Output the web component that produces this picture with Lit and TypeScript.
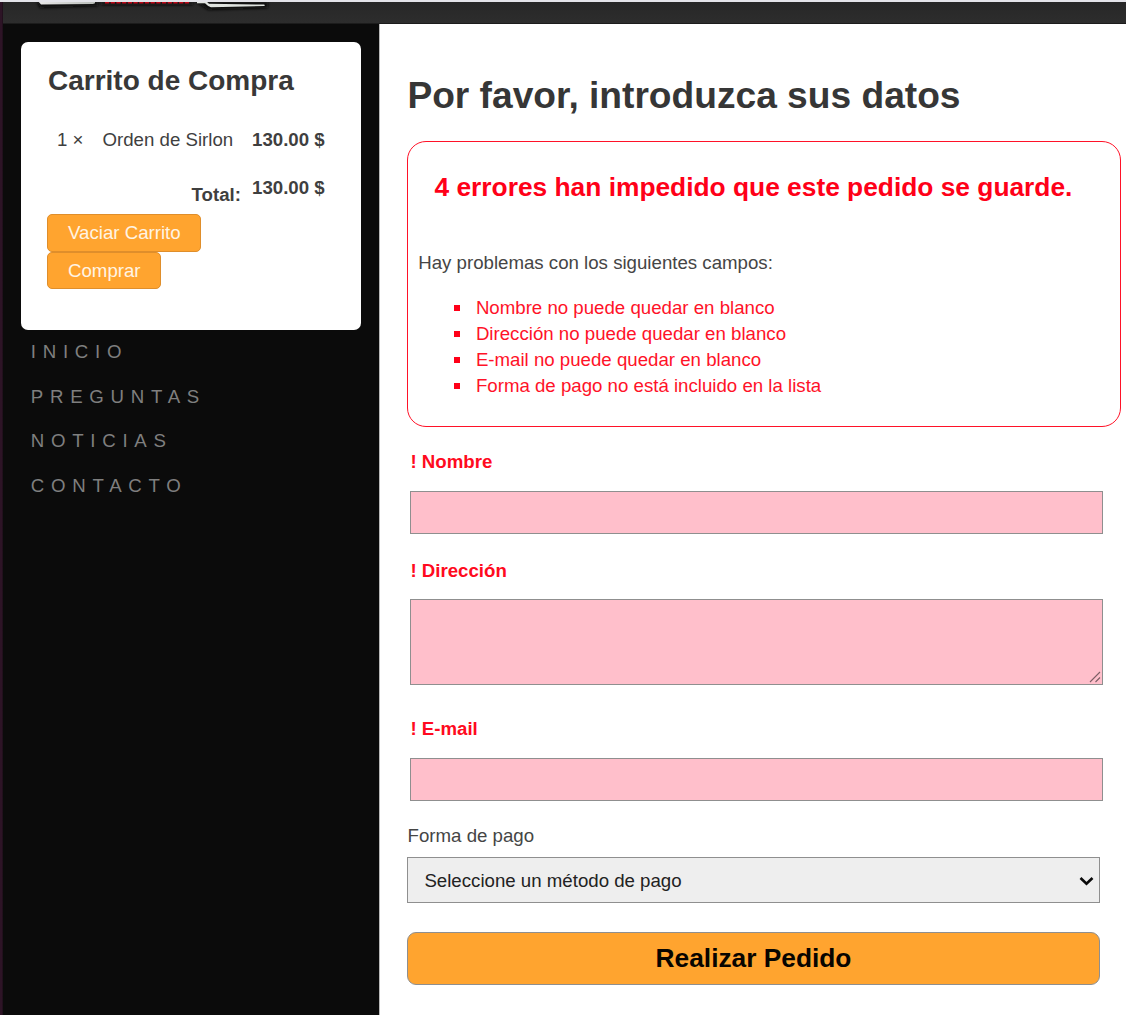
import { LitElement, html, css } from "lit";
import { customElement, property } from "lit/decorators.js";

const SANS = css`"Liberation Sans", Arial, Helvetica, sans-serif`;

@customElement("shop-cart")
class ShopCart extends LitElement {
  static styles = css`
    :host { display: block; box-sizing: border-box; width: 340px; height: 287.5px; padding: 23.4px 26px 0 26px;
      background: #fff; border-radius: 7px; color: #3f3f3f; font: 18.67px/26px ${SANS}; }
    .title { margin: 0 0 29.2px; font-size: 28px; line-height: 32px; font-weight: bold; color: #383838; padding-left: 1px; }
    .line { display: grid; grid-template-columns: 45.5px 149.5px 1fr; padding-left: 10px; white-space: nowrap; }
    .total { margin-top: 22.8px; height: 33px; }
    .label { grid-column: 1 / 3; text-align: right; padding: 6.2px 11px 0 0; }
    .amount, .label { font-weight: bold; }
    .actions { display: flex; flex-direction: column; align-items: flex-start; margin-top: 6.1px; }
    .btn { box-sizing: border-box; height: 37.5px; padding: 0 19px 0 20px; border: 1px solid #df8e2b; border-radius: 5px;
      background: #ffa42f; color: #fff4e4; font: inherit; }
  `;
  render() {
    return html`
      <h2 class="title">Carrito de Compra</h2>
      <div class="line"><span>1 ×</span><span>Orden de Sirlon</span><span class="amount">130.00 $</span></div>
      <div class="line total"><span class="label">Total:</span><span class="amount">130.00 $</span></div>
      <div class="actions">
        <button class="btn">Vaciar Carrito</button>
        <button class="btn">Comprar</button>
      </div>`;
  }
}

@customElement("error-summary")
class ErrorSummary extends LitElement {
  @property({ attribute: false }) errors: string[] = [];
  static styles = css`
    :host { display: block; box-sizing: border-box; width: 714px; height: 286px; padding: 30px 9px 0;
      border: 1px solid #ff1228; border-radius: 19px; color: #454545; font: 18.67px/26px ${SANS}; }
    .title { margin: 0 0 48px; padding-left: 17.5px; font-size: 26.34px; line-height: 30px; color: #ff0018; white-space: nowrap; }
    .intro { margin: 0 0 19.2px; padding-left: 1.2px; }
    .list { margin: 0; padding: 0; list-style: none; color: #ff1228; }
    .item { display: flex; align-items: center; height: 25.9px; line-height: 25.9px; padding-left: 37px; gap: 15.9px; }
    .mark { width: 6px; height: 6px; background: #ff0018; }
  `;
  render() {
    return html`
      <h2 class="title">${this.errors.length} errores han impedido que este pedido se guarde.</h2>
      <p class="intro">Hay problemas con los siguientes campos:</p>
      <ul class="list">
        ${this.errors.map((e) => html`<li class="item"><span class="mark"></span><span>${e}</span></li>`)}
      </ul>`;
  }
}

@customElement("app-root")
class AppRoot extends LitElement {
  static styles = css`
    :host { display: block; width: 1126px; height: 1015px; overflow: hidden; background: #fff; font: 18.67px/26px ${SANS}; }
    .window { box-sizing: border-box; height: 1015px; display: grid; grid-template-columns: 3px 1fr; grid-template-rows: 2px 1fr; }
    .topline { grid-column: 1 / 3; background: #e4e4ea; }
    .edge { background: linear-gradient(90deg, #2d1426, #2d1426 66%, #170c14); }
    .page { display: flex; flex-direction: column; }
    .header { box-sizing: border-box; height: 22px; background: linear-gradient(#272727, #2d2d2d); border-bottom: 1px solid #1c1c1c; }
    .logo { display: block; }
    .body { flex: 1; display: flex; }
    .side { box-sizing: border-box; width: 376px; background: #0b0b0b; padding: 18px 0 0 18px; flex: none; }
    .menu { display: flex; flex-direction: column; padding: 0.5px 0 0 9.8px; }
    .link { height: 44.5px; line-height: 44.5px; letter-spacing: 6.72px; color: #7f7f7f; text-decoration: none; }
    .main { flex: 1; padding: 50px 0 0 27px; border-left: 1px solid #b9b9b9; box-sizing: border-box; }
    .heading { margin: 0 0 24px 0.4px; font-size: 37.15px; line-height: 43px; color: #363636; white-space: nowrap; }
    .form { display: flex; flex-direction: column; align-items: flex-start; }
    .bad { font-weight: bold; color: #ff0a20; margin-left: 3.4px; }
    .field { box-sizing: border-box; display: block; width: 693px; height: 43px; margin: 0 0 0 3px; padding: 8px;
      border: 1px solid #8f8f8f; border-radius: 0; background: #ffbfcb; font: inherit; outline: none; resize: none; }
    .area { position: relative; }
    .tall { height: 86px; }
    .grip { position: absolute; right: 2px; bottom: 2px; }
    .g1 { margin-top: 22px; margin-bottom: 16px; }
    .g2 { margin-top: 24.2px; margin-bottom: 14.8px; }
    .g3 { margin-top: 31px; margin-bottom: 16px; }
    .g4 { margin-top: 21.6px; margin-bottom: 8.4px; padding-left: 0.6px; color: #454545; }
    .select { box-sizing: border-box; width: 693px; height: 46px; padding: 3px 5px 0 16.4px; border: 1px solid #8f8f8f;
      background: #eee; color: #222; display: flex; align-items: center; justify-content: space-between; }
    .submit { box-sizing: border-box; width: 693px; height: 53px; margin: 29px 0 0; padding: 0 0 1px; border: 1px solid #8f8f8f;
      border-radius: 9px; background: #ffa42f; color: #080500; font: bold 26.3px/30px ${SANS}; }
  `;

  private menu = ["INICIO", "PREGUNTAS", "NOTICIAS", "CONTACTO"];
  private errors = [
    "Nombre no puede quedar en blanco",
    "Dirección no puede quedar en blanco",
    "E-mail no puede quedar en blanco",
    "Forma de pago no está incluido en la lista",
  ];

  render() {
    return html`
      <div class="window">
        <div class="topline"></div>
        <div class="edge"></div>
        <div class="page">
          <header class="header">
            <svg class="logo" width="300" height="21" viewBox="3 2 300 21">
              <defs>
                <linearGradient id="m" x1="0" x2="1"><stop offset="0" stop-color="#e8e8e8" /><stop offset="1" stop-color="#b8bcb8" /></linearGradient>
                <filter id="s" x="-20%" y="-150%" width="140%" height="500%"><feGaussianBlur stdDeviation="1.8" /></filter>
              </defs>
              <path d="M37 2H98V6L40 8ZM101 2H193V5H101ZM196 2H268V8L208 10Z" fill="#080808" filter="url(#s)" />
              <path d="M38 1H95V3.2L93 3.9 41 4.5Z" fill="url(#m)" />
              <path d="M105 2.7H189" stroke="#c00818" stroke-width="1.8" stroke-dasharray="4.2 1.5" />
              <path d="M197 1H206L209 3.8 264 4.6Q266 5.4 264 6L211 7.2Q208 6.5 205 3.2H197Z" fill="#dfe3df" />
            </svg>
          </header>
          <div class="body">
            <aside class="side">
              <shop-cart></shop-cart>
              <nav class="menu">${this.menu.map((m) => html`<a class="link">${m}</a>`)}</nav>
            </aside>
            <main class="main">
              <h1 class="heading">Por favor, introduzca sus datos</h1>
              <error-summary .errors=${this.errors}></error-summary>
              <div class="form">
                <label class="bad g1">! Nombre</label>
                <input class="field" />
                <label class="bad g2">! Dirección</label>
                <div class="area">
                  <textarea class="field tall"></textarea>
                  <svg class="grip" width="12" height="12" viewBox="0 0 12 12" fill="none" stroke="#7d5f66" stroke-width="1.1">
                    <path d="M1 11 11 1M6.5 11 11 6.5" />
                  </svg>
                </div>
                <label class="bad g3">! E-mail</label>
                <input class="field" />
                <label class="g4">Forma de pago</label>
                <div class="select" role="combobox" tabindex="0">
                  <span>Seleccione un método de pago</span>
                  <svg width="15" height="11" viewBox="0 0 15 11" fill="none" stroke="#0a0a0a" stroke-width="2.6">
                    <path d="M1.5 2 7.5 7.8 13.5 2" />
                  </svg>
                </div>
                <button class="submit">Realizar Pedido</button>
              </div>
            </main>
          </div>
        </div>
      </div>`;
  }
}
